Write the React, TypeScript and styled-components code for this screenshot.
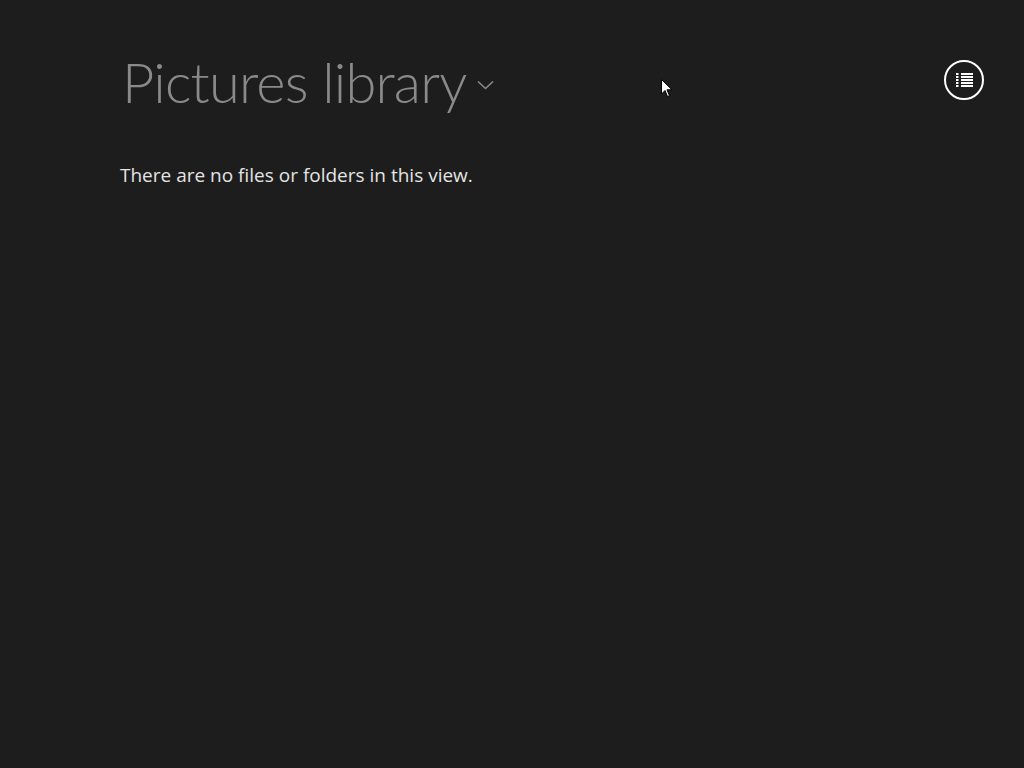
import React from 'react';
import styled, { createGlobalStyle } from 'styled-components';

const GlobalStyle = createGlobalStyle`
    html, body {
        margin: 0;
        padding: 0;
        background: #1d1d1d;
    }
`;

const StyledPage = styled.div`
    position: relative;
    width: 1024px;
    height: 768px;
    background: #1d1d1d;
    font-family: 'Open Sans', 'Noto Sans', sans-serif;
    overflow: hidden;
`;

const StyledHeader = styled.div`
    display: flex;
    justify-content: space-between;
    align-items: flex-start;
    padding: 46px 40px 0 122px;
`;

const StyledTitleButton = styled.div`
    display: flex;
    align-items: flex-start;
    gap: 11px;
    cursor: pointer;
`;

const StyledTitle = styled.span`
    font-family: Lato, 'Open Sans', sans-serif;
    font-size: 56px;
    font-weight: 300;
    line-height: 72px;
    letter-spacing: -0.8px;
    color: #8a8a8a;
`;

const StyledChevron = styled.svg`
    margin-top: 34px;
`;

const StyledRoundButton = styled.button`
    display: flex;
    align-items: center;
    justify-content: center;
    width: 40px;
    height: 40px;
    margin-top: 14px;
    border: 2px solid #ffffff;
    border-radius: 50%;
    background: transparent;
    padding: 0;
`;

const StyledMessage = styled.p`
    margin: 44px 0 0 120px;
    font-size: 19px;
    color: #e4e4e4;
`;

const StyledCursor = styled.svg`
    position: absolute;
    left: 661px;
    top: 79px;
`;

const App: React.FC = () => {
    return (
        <StyledPage>
            <GlobalStyle />
            <StyledHeader>
                <StyledTitleButton>
                    <StyledTitle>Pictures library</StyledTitle>
                    <StyledChevron width="17" height="10" viewBox="0 0 17 10">
                        <path d="M1 1.5 L8.5 8.5 L16 1.5" fill="none" stroke="#8a8a8a" strokeWidth="1.6" />
                    </StyledChevron>
                </StyledTitleButton>
                <StyledRoundButton>
                    <svg width="17" height="14" viewBox="0 0 17 14">
                        {[1, 4, 7, 10, 13].map((y) => (
                            <g key={y} fill="#ffffff">
                                <rect x="0" y={y - 1} width="2.5" height="2" />
                                <rect x="5" y={y - 1} width="12" height="2" />
                            </g>
                        ))}
                    </svg>
                </StyledRoundButton>
            </StyledHeader>
            <StyledMessage>There are no files or folders in this view.</StyledMessage>
            <StyledCursor width="12" height="19" viewBox="0 0 12 19">
                <path d="M0.5 0.5 L0.5 15 L4 11.5 L6.5 17.5 L8.5 16.7 L6 10.8 L11 10.8 Z" fill="#ffffff" stroke="#000000" strokeWidth="1" />
            </StyledCursor>
        </StyledPage>
    );
};

export default App;
